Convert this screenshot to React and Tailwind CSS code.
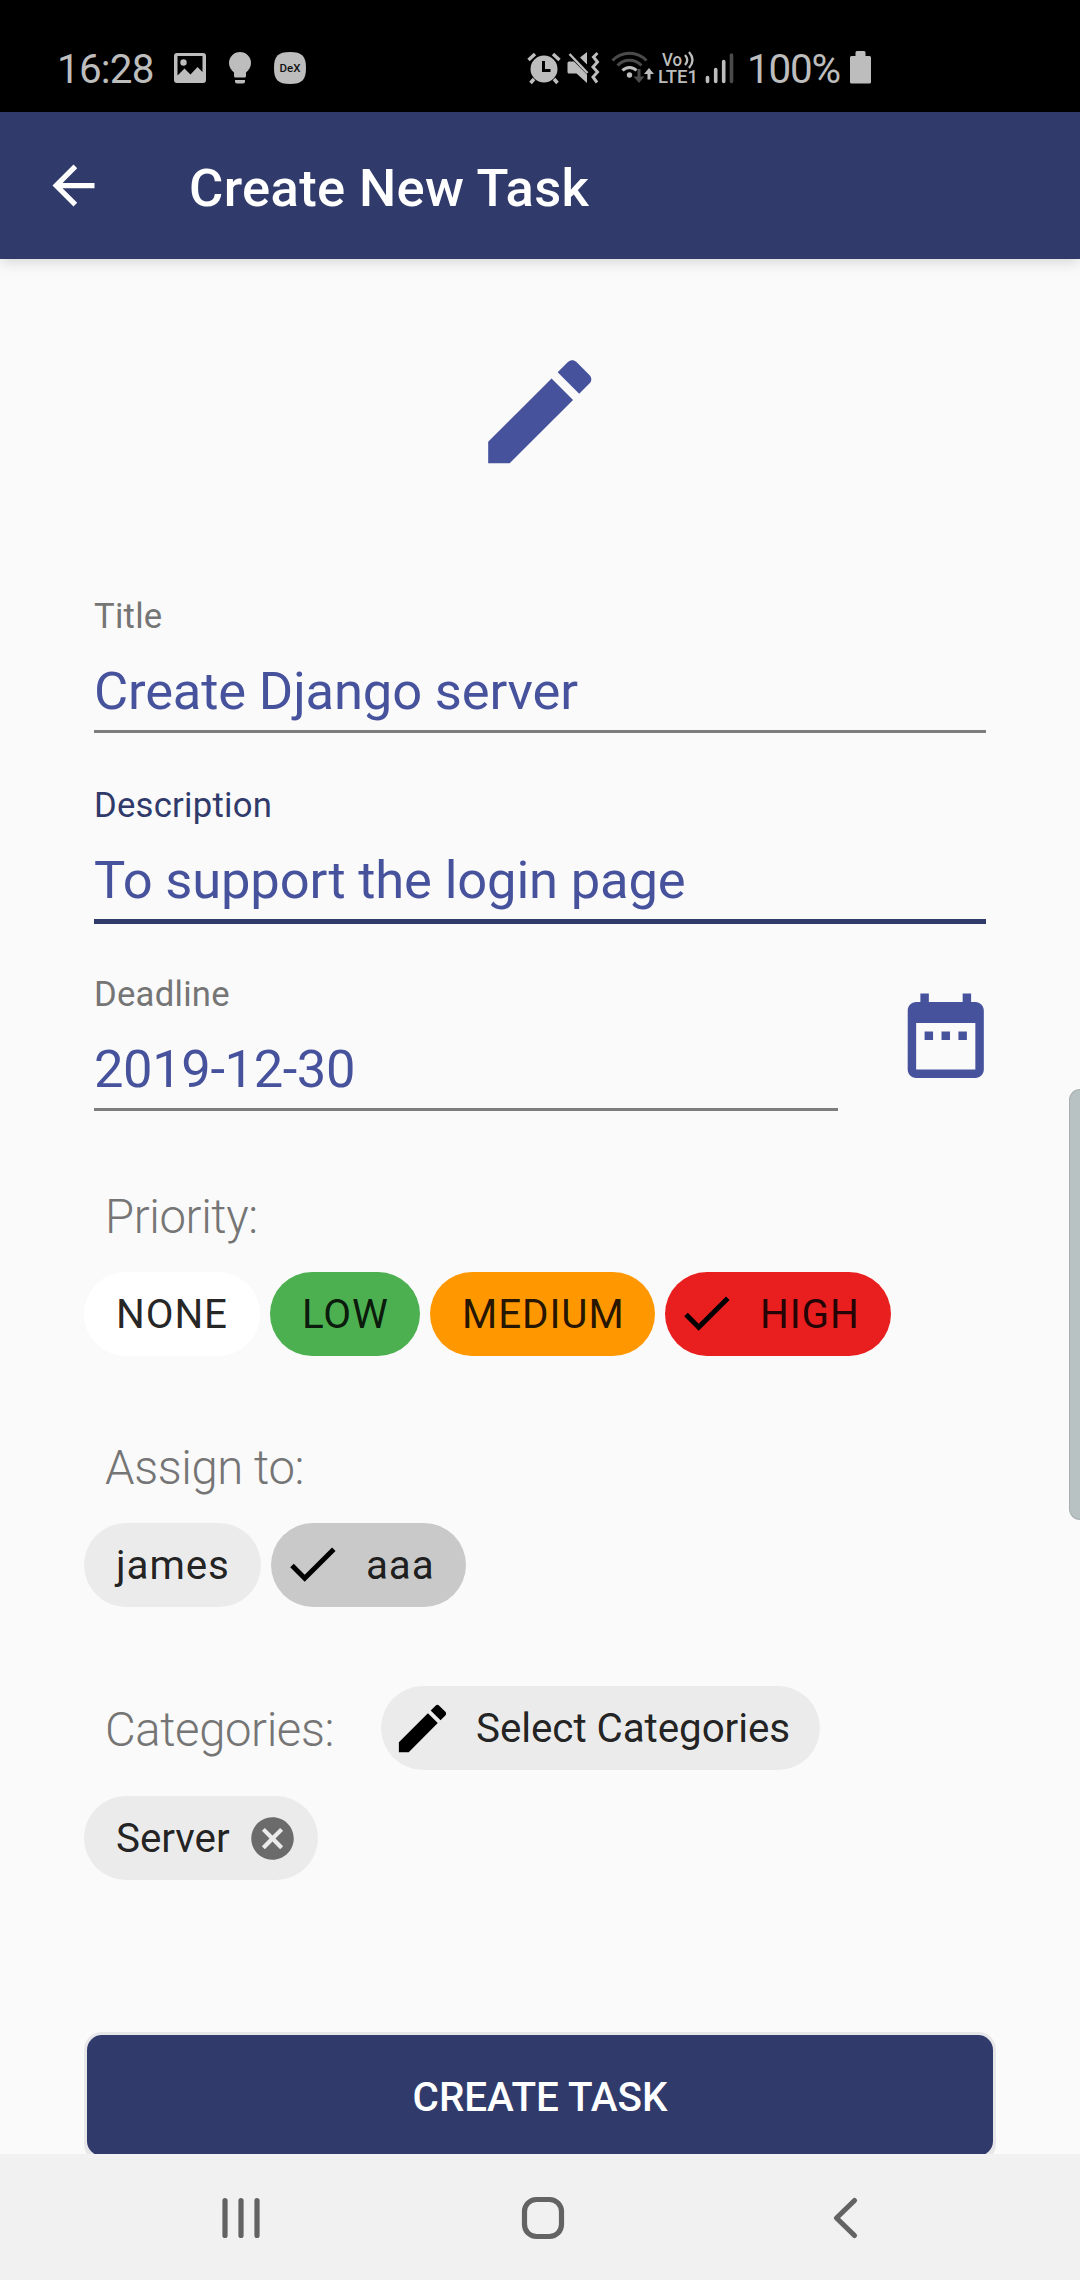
const EDIT_PATH =
  "M3 17.25V21h3.75L17.81 9.94l-3.75-3.75L3 17.25zM20.71 7.04c.39-.39.39-1.02 0-1.41l-2.34-2.34c-.39-.39-1.02-.39-1.41 0l-1.83 1.83 3.75 3.75 1.83-1.83z";

function Glyph({ d, className }) {
  return (
    <svg viewBox="0 0 24 24" fill="currentColor" className={className}>
      <path d={d} />
    </svg>
  );
}

function StatusBar() {
  return (
    <div className="flex h-[112px] shrink-0 bg-black pt-[45px] text-[40.4px] leading-[50px] text-[#bdbdbd]">
      <span className="ml-[57px] w-[116px] tracking-[-0.8px]">16:28</span>
      {/* gallery, tip and desktop-mode notifications */}
      <svg viewBox="173 45 136 48" className="h-[48px] w-[136px]" fill="#bdbdbd">
        <path fillRule="evenodd" d="M177 53h26a3 3 0 0 1 3 3v24a3 3 0 0 1-3 3h-26a3 3 0 0 1-3-3V56a3 3 0 0 1 3-3zm0.500 3v19.500l7-7 6 6 7-7.500 5 5V56z" />
        <circle cx="183.500" cy="62.500" r="3.200" />
        <path d="M240 52a11 11 0 0 1 11 11c0 4-2 7-5 9.500V76a1.500 1.500 0 0 1-1.500 1.500h-9A1.500 1.500 0 0 1 234 76v-3.500c-3-2.500-5-5.500-5-9.500a11 11 0 0 1 11-11zM235 80h10v1.500a2 2 0 0 1-2 2h-6a2 2 0 0 1-2-2z" />
        <path d="M290 52c12 0 16 4 16 16s-4 16-16 16-16-4-16-16 4-16 16-16z" />
        <text x="290" y="72" textAnchor="middle" fontSize="11.500" fontWeight="500" fontFamily="Roboto, sans-serif" fill="#111">DeX</text>
      </svg>
      {/* alarm, mute, wifi, LTE and signal strength */}
      <svg viewBox="525 45 212 48" className="ml-[216px] h-[48px] w-[212px]" fill="#bdbdbd">
        <circle cx="544" cy="69" r="13.500" />
        <g stroke="#bdbdbd" strokeWidth="3.500" fill="none">
          <path d="M528.500 60l6.500-6M553 54l6.500 6M534 79l-3.500 4M554 79l3.500 4" />
        </g>
        <path d="M543.500 61v9.500h7" stroke="#000" strokeWidth="3" fill="none" />
        <path d="M569 61.500h5l13 13V83l-10.500-9.500H569a1.500 1.500 0 0 1-1.500-1.500v-9a1.500 1.500 0 0 1 1.500-1.500zM580 57.500l7-5.500v12.500z" />
        <path d="M569.500 54l18 19" stroke="#bdbdbd" strokeWidth="2.500" />
        <path d="M597.500 53l-4 4 4 5-4.500 5 4.500 5-4.500 5 4 5.500" stroke="#bdbdbd" strokeWidth="3" fill="none" />
        <g fill="none" strokeWidth="3">
          <path d="M612.500 60.500a23.500 23.500 0 0 1 34 0" stroke="#4b4b4b" />
          <path d="M617.500 65.500a16.500 16.500 0 0 1 24 0" stroke="#4b4b4b" />
          <path d="M622.500 70.500a9.500 9.500 0 0 1 14 0" stroke="#bdbdbd" />
        </g>
        <circle cx="629.500" cy="75" r="2.700" />
        <path d="M637.500 69h3v7.500h4l-5.500 6.500-5.500-6.500h4z" fill="#4b4b4b" />
        <path d="M647.500 79.500h3V74h3.500l-5-6-5 6h3.500z" />
        <g fontFamily="Roboto, sans-serif" fontWeight="500">
          <text x="662" y="65.500" fontSize="17.500" textLength="20" lengthAdjust="spacingAndGlyphs">Vo</text>
          <text x="658" y="82.800" fontSize="18.500" textLength="40" lengthAdjust="spacingAndGlyphs">LTE1</text>
        </g>
        <path d="M685 55q4.500 5 0 10M689 52q7 8 0 16" stroke="#bdbdbd" strokeWidth="2.300" fill="none" />
        <g strokeWidth="3.600" strokeLinecap="round">
          <path d="M707.500 77.500v4M715.700 69.500v12M723.700 61.500v20" stroke="#bdbdbd" />
          <path d="M731.500 55v26.500" stroke="#4b4b4b" />
        </g>
      </svg>
      <span className="ml-[10px] w-[103px] tracking-[-1.2px]">100%</span>
      <svg viewBox="850 45 22 48" className="h-[48px] w-[22px]" fill="#bdbdbd">
        <path d="M857 51h7a1.500 1.500 0 0 1 1.500 1.500V56h4a1.500 1.500 0 0 1 1.500 1.500V82a1.500 1.500 0 0 1-1.500 1.500h-18A1.500 1.500 0 0 1 850 82V57.500a1.500 1.500 0 0 1 1.500-1.500h4v-3.500A1.500 1.500 0 0 1 857 51z" />
      </svg>
    </div>
  );
}

function Field({ label, value, focused, tracking = "tracking-[-0.15px]" }) {
  return (
    <div className="h-[189px]">
      <div className={"text-[34.65px] leading-[40px] tracking-[0.25px] " + (focused ? "text-[#303a6b]" : "text-[#757575]")}>{label}</div>
      <div className={"mt-[25px] mb-[9px] text-[52.5px] leading-[60px] text-[#47529d] " + tracking}>{value}</div>
      <div className={focused ? "h-[5px] bg-[#303a6b]" : "h-[3px] bg-[#7d7d7d]"} />
    </div>
  );
}

function SectionLabel({ children }) {
  return (
    <div className="pt-px pl-[21px] text-[47.25px] leading-[55px] font-light tracking-[-0.38px] text-[#757575]">{children}</div>
  );
}

function Check() {
  return (
    <svg viewBox="0 0 46 36" className="h-[36px] w-[46px]">
      <path d="M2 18.500l12.700 12.700L43.800 2.200" fill="none" stroke="#000" strokeWidth="5" />
    </svg>
  );
}

function Chip({ color, tracking = "tracking-[0.9px]", children }) {
  return (
    <div className={"flex h-[84px] shrink-0 items-center rounded-full text-[40.4px] leading-[48px] whitespace-nowrap text-black/87 " + tracking + " " + color}>
      {children}
    </div>
  );
}

export default function App() {
  return (
    <div className="relative flex h-[2280px] w-[1080px] flex-col overflow-hidden bg-[#fafafa] font-['Roboto',sans-serif]">
      <StatusBar />
      <header className="z-10 flex h-[147px] shrink-0 items-center bg-[#303a6b] pl-[42px] text-white shadow-[0_2px_14px_rgba(0,0,0,0.17)]">
        <Glyph d="M20 11H7.830l5.590-5.590L12 4l-8 8 8 8 1.410-1.410L7.830 13H20v-2z" className="h-[63px] w-[63px]" />
        <h1 className="ml-[84px] pt-[4px] text-[52.5px] leading-[60px] font-medium tracking-[0.36px]">Create New Task</h1>
      </header>

      <main className="flex h-[1895px] shrink-0 flex-col overflow-hidden">
        <Glyph d={EDIT_PATH} className="mt-[83.500px] h-[137.500px] w-[137.500px] shrink-0 self-center text-[#47529d]" />
        <div className="mt-[116px] px-[94px]">
          <Field label="Title" value="Create Django server" />
          <Field label="Description" value="To support the login page" focused />
          <div className="flex">
            <div className="w-[744px] shrink-0">
              <Field label="Deadline" value="2019-12-30" tracking="tracking-[-0.4px]" />
            </div>
            <Glyph
              d="M9 11H7v2h2v-2zm4 0h-2v2h2v-2zm4 0h-2v2h2v-2zm2-7h-1V2h-2v2H8V2H6v2H5c-1.110 0-1.990.9-1.990 2L3 20c0 1.100.89 2 2 2h14c1.100 0 2-.9 2-2V6c0-1.100-.9-2-2-2zm0 16H5V9h14v11z"
              className="mt-[11px] ml-[57px] h-[101.500px] w-[101.500px] shrink-0 text-[#47529d]"
            />
          </div>
        </div>

        <section className="mt-[26px] pl-[84px]">
          <SectionLabel>Priority:</SectionLabel>
          <div className="mt-[27px] flex gap-[10px]">
            <Chip color="w-[176px] bg-white pl-[32px]"><span className="pt-[2px]">NONE</span></Chip>
            <Chip color="w-[150px] bg-[#4caf50] pl-[32px]"><span className="pt-[2px]">LOW</span></Chip>
            <Chip color="w-[225px] bg-[#ff9800] pl-[32px]"><span className="pt-[2px]">MEDIUM</span></Chip>
            <Chip color="w-[226px] bg-[#e91e1e] pl-[19px]">
              <Check />
              <span className="ml-[30px] pt-[2px]">HIGH</span>
            </Chip>
          </div>
        </section>

        <section className="mt-[84px] pl-[84px]">
          <SectionLabel>Assign to:</SectionLabel>
          <div className="mt-[27px] flex gap-[10px]">
            <Chip color="w-[177px] bg-[#ebebeb] pl-[32px]"><span className="pt-[2px]">james</span></Chip>
            <Chip color="w-[195px] bg-[#c9c9c9] pl-[19px]">
              <Check />
              <span className="ml-[30px] pt-[2px]">aaa</span>
            </Chip>
          </div>
        </section>

        <section className="mt-[79px] pl-[84px]">
          <div className="flex">
            <div className="w-[297px] shrink-0 pt-[16px]">
              <SectionLabel>Categories:</SectionLabel>
            </div>
            <Chip color="w-[439px] bg-[#ebebeb] pl-[10px]" tracking="tracking-[-0.08px]">
              <Glyph d={EDIT_PATH} className="h-[63px] w-[63px] text-black" />
              <span className="ml-[22px] pt-[2px]">Select Categories</span>
            </Chip>
          </div>
          <div className="mt-[26px] flex">
            <Chip color="w-[234px] bg-[#ebebeb] pl-[32px]" tracking="tracking-[-0.05px]">
              <span className="w-[131px] pt-[2px]">Server</span>
              <Glyph
                d="M12 2C6.470 2 2 6.470 2 12s4.470 10 10 10 10-4.470 10-10S17.530 2 12 2zm5 13.590L15.590 17 12 13.410 8.410 17 7 15.590 10.590 12 7 8.410 8.410 7 12 10.590 15.590 7 17 8.410 13.410 12 17 15.590z"
                className="h-[51px] w-[51px] text-[#6b6b6b]"
              />
            </Chip>
          </div>
        </section>

        <div className="mx-[84px] mt-[152px] h-[130px] shrink-0 rounded-[18px] bg-[#e7e7e9] p-[3px]">
          <button className="flex h-[121px] w-full items-center justify-center rounded-[15px] bg-[#303a6b] pt-[4px] text-[40.4px] leading-[48px] font-medium text-white">
            CREATE TASK
          </button>
        </div>
      </main>

      <nav className="flex h-[126px] shrink-0 bg-[#f1f1f1]">
        <svg viewBox="0 0 1080 126" className="h-[126px] w-[1080px]" fill="none" stroke="#636363" strokeWidth="5.200" strokeLinecap="round" strokeLinejoin="round">
          <path d="M225 46.500v35M241 46.500v35M257 46.500v35" />
          <rect x="524.500" y="45.500" width="37" height="37" rx="12" />
          <path d="M854.500 46.500L836.500 64l18 17.500" />
        </svg>
      </nav>

      {/* scroll handle floating over the page edge */}
      <div className="absolute top-[1089px] right-0 h-[431px] w-[11px] rounded-l-[12px] border border-r-0 border-[#a9afb0] bg-[#b8c2c3]" />
    </div>
  );
}
